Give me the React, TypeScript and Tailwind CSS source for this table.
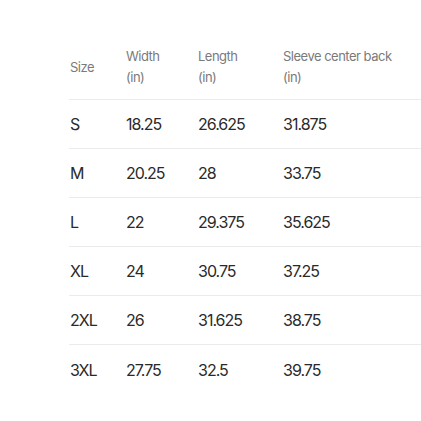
import React from "react";

const rows = [
  ["S", "18.25", "26.625", "31.875"],
  ["M", "20.25", "28", "33.75"],
  ["L", "22", "29.375", "35.625"],
  ["XL", "24", "30.75", "37.25"],
  ["2XL", "26", "31.625", "38.75"],
  ["3XL", "27.75", "32.5", "39.75"],
];

export default function App() {
  return (
    <div
      className="w-[421px] h-[421px] bg-white pt-[35px] pl-[69px]"
      style={{ fontFamily: "Inter, 'Liberation Sans', sans-serif" }}
    >
      <div className="grid grid-cols-[57px_72px_85px_1fr] h-[65px] items-center border-b border-[#ebebeb] text-[13px] leading-[21px] text-[#7a7a7a] tracking-[-0.5px]">
        <div className="pl-[1px]">Size</div>
        <div>
          Width
          <br />
          (in)
        </div>
        <div>
          Length
          <br />
          (in)
        </div>
        <div>
          Sleeve center back
          <br />
          (in)
        </div>
      </div>
      {rows.map((r, i) => (
        <div
          key={r[0]}
          className={`grid grid-cols-[57px_72px_85px_1fr] h-[49px] items-center text-[16px] text-[#2a2a2a] tracking-[-1px] ${
            i < rows.length - 1 ? "border-b border-[#ebebeb]" : ""
          }`}
        >
          {r.map((c, j) => (
            <div key={j} className={j === 0 ? "pl-[1px]" : ""}>
              {c}
            </div>
          ))}
        </div>
      ))}
    </div>
  );
}
